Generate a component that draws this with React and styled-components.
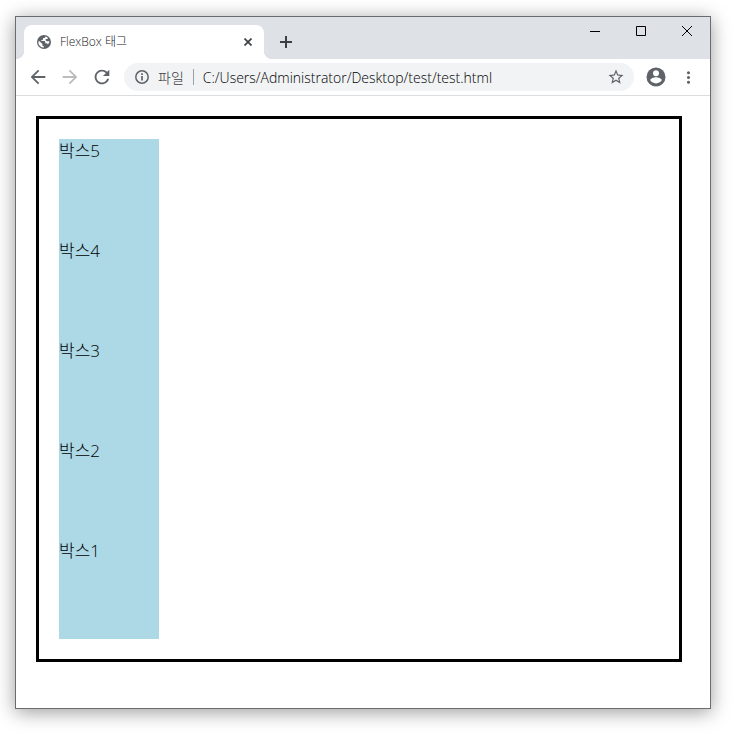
import React from 'react';
import styled, { createGlobalStyle } from 'styled-components';
import { MdArrowBack, MdArrowForward, MdMoreVert, MdRefresh, MdStarBorder } from 'react-icons/md';

const GlobalStyle = createGlobalStyle`
  * {
    box-sizing: border-box;
  }

  body {
    margin: 0;
    padding: 16px 29px 30px 15px;
    background: #fff;
    color: #000;
    font-family: 'Open Sans', 'Noto Sans CJK KR', sans-serif;
  }
`;

const Window = styled.div`
  border: 1px solid #6b6c6e;
  background: #fff;
  box-shadow: 0 3px 18px rgba(0, 0, 0, 0.4);
`;

const TitleBar = styled.header`
  display: flex;
  height: 42px;
  padding-left: 8px;
  background: #dee1e6;
`;

const Tab = styled.div`
  position: relative;
  display: flex;
  align-items: center;
  width: 240px;
  margin-top: 8px;
  padding: 0 8px 0 13px;
  border-radius: 8px 8px 0 0;
  background: #fff;
  color: #202124;

  &::before,
  &::after {
    content: '';
    position: absolute;
    bottom: 0;
    width: 8px;
    height: 8px;
  }

  &::before {
    right: 100%;
    background: radial-gradient(circle at 0 0, transparent 8px, #fff 8px);
  }

  &::after {
    left: 100%;
    background: radial-gradient(circle at 100% 0, transparent 8px, #fff 8px);
  }
`;

const TabTitle = styled.span`
  flex: 1;
  margin-left: 9px;
  font-size: 12px;
  font-weight: 300;
  line-height: 16px;
`;

const IconButton = styled.button`
  display: flex;
  align-items: center;
  justify-content: center;
  flex: none;
  width: ${({ $size }) => $size || 32}px;
  height: ${({ $size }) => $size || 32}px;
  padding: 0;
  border: 0;
  background: none;
  color: ${({ $color }) => $color || '#5f6368'};
`;

const NewTab = styled(IconButton)`
  margin: 9px auto 0 6px;
`;

const WindowButton = styled.button`
  display: flex;
  align-items: center;
  justify-content: center;
  width: 46px;
  height: 28px;
  padding: 0;
  border: 0;
  background: none;
  color: #000;
`;

const Toolbar = styled.nav`
  display: flex;
  align-items: center;
  height: 37px;
  padding: 0 6px;
  border-bottom: 1px solid #dadce0;
`;

const AddressBar = styled.div`
  display: flex;
  flex: 1;
  align-items: center;
  min-width: 0;
  height: 28px;
  margin: 0 6px;
  padding: 0 9px 0 11px;
  border-radius: 14px;
  background: #f1f3f4;
`;

const SiteInfo = styled.button`
  display: flex;
  align-items: center;
  gap: 9px;
  flex: none;
  height: 16px;
  padding: 0 9px 0 0;
  border: 0;
  border-right: 1px solid #9aa0a6;
  background: none;
  color: #3c4043;
  font: 300 14px 'Open Sans', 'Noto Sans CJK KR', sans-serif;
`;

const AddressInput = styled.input`
  flex: 1;
  min-width: 0;
  height: 18px;
  padding: 0 0 0 9px;
  border: 0;
  outline: 0;
  background: none;
  color: #000;
  font: 300 14px 'Open Sans', 'Noto Sans CJK KR', sans-serif;
`;

const Page = styled.main`
  padding: 20px 28px 46px 20px;
`;

const Container = styled.div`
  display: flex;
  flex-direction: column-reverse;
  align-items: flex-start;
  padding: 20px;
  border: 3px solid #000;
`;

const Box = styled.div`
  width: 100px;
  height: 100px;
  background: lightblue;
  font-size: 17px;
  font-weight: 300;
  line-height: 24px;
`;

const GlobeIcon = () => (
  <svg width="14" height="14" viewBox="0 0 14 14" aria-hidden="true">
    <circle cx="7" cy="7" r="7" fill="#5f6368" />
    <path
      d="M8.3 1.5c.2.9-.4 1.5-1.2 1.5-.9 0-1.2.5-1.2 1.2s-.5 1-1.2 1c-.5 0-.8.4-.8.9h2.9c1 0 1.5.5 1.5 1.3v.9h1.3c.7 0 1.1.4 1.2 1.1a5.6 5.6 0 0 0 1.7-3.1H10c-.8 0-1.3-.5-1.3-1.2V4h1.2c.7 0 1-.4 1-1a5.6 5.6 0 0 0-2.6-1.5zM1.4 6.2a5.6 5.6 0 0 0 5.5 6.4v-1.4c-.9 0-1.5-.5-1.5-1.3v-.8L2.5 6.2z"
      fill="#fff"
    />
  </svg>
);

const CloseIcon = () => (
  <svg width="8" height="8" viewBox="0 0 8 8" aria-hidden="true">
    <path d="M.5.5l7 7m0-7l-7 7" stroke="currentColor" strokeWidth="1.7" />
  </svg>
);

const PlusIcon = () => (
  <svg width="12" height="12" viewBox="0 0 12 12" aria-hidden="true">
    <path d="M6 0v12M0 6h12" stroke="currentColor" strokeWidth="2" />
  </svg>
);

const InfoIcon = () => (
  <svg width="14" height="14" viewBox="0 0 14 14" aria-hidden="true">
    <circle cx="7" cy="7" r="6.2" fill="none" stroke="#5f6368" strokeWidth="1.5" />
    <path d="M7 6v4.5M7 3.3v1.7" stroke="#5f6368" strokeWidth="1.7" />
  </svg>
);

const ProfileIcon = () => (
  <svg width="20" height="20" viewBox="0 0 20 20" aria-hidden="true">
    <circle cx="10" cy="10" r="9.5" fill="currentColor" />
    <circle cx="10" cy="6.3" r="3" fill="#fff" />
    <path d="M4.2 13.3c.2-2 3.9-3 5.8-3s5.6 1 5.8 3a7 7 0 0 1-11.6 0z" fill="#fff" />
  </svg>
);

const windowButtons = [
  { label: 'Minimize', path: 'M0 5.5h10' },
  { label: 'Maximize', path: 'M.5.5h9v9h-9z' },
  { label: 'Close', path: 'M0 0l10 10m0-10L0 10' },
];

const boxes = ['박스1', '박스2', '박스3', '박스4', '박스5'];

const App = () => {
  const [address, setAddress] = React.useState('C:/Users/Administrator/Desktop/test/test.html');

  return (
    <>
      <GlobalStyle />
      <Window>
        <TitleBar>
          <Tab>
            <GlobeIcon />
            <TabTitle>FlexBox 태그</TabTitle>
            <IconButton $size={16} $color="#3c4043" aria-label="Close tab">
              <CloseIcon />
            </IconButton>
          </Tab>
          <NewTab $color="#3c4043" aria-label="New tab">
            <PlusIcon />
          </NewTab>
          {windowButtons.map(({ label, path }) => (
            <WindowButton key={label} aria-label={label}>
              <svg width="10" height="10" viewBox="0 0 10 10" aria-hidden="true">
                <path d={path} fill="none" stroke="currentColor" />
              </svg>
            </WindowButton>
          ))}
        </TitleBar>
        <Toolbar>
          <IconButton aria-label="Back">
            <MdArrowBack size={22} />
          </IconButton>
          <IconButton $color="#babcbe" aria-label="Forward">
            <MdArrowForward size={22} />
          </IconButton>
          <IconButton aria-label="Reload">
            <MdRefresh size={22} />
          </IconButton>
          <AddressBar>
            <SiteInfo>
              <InfoIcon />
              파일
            </SiteInfo>
            <AddressInput
              aria-label="Address"
              value={address}
              onChange={(e) => setAddress(e.target.value)}
            />
            <IconButton $size={18} aria-label="Bookmark">
              <MdStarBorder size={18} />
            </IconButton>
          </AddressBar>
          <IconButton aria-label="Profile">
            <ProfileIcon />
          </IconButton>
          <IconButton aria-label="Menu">
            <MdMoreVert size={19} />
          </IconButton>
        </Toolbar>
        <Page>
          <Container>
            {boxes.map((text) => (
              <Box key={text}>{text}</Box>
            ))}
          </Container>
        </Page>
      </Window>
    </>
  );
};

export default App;
